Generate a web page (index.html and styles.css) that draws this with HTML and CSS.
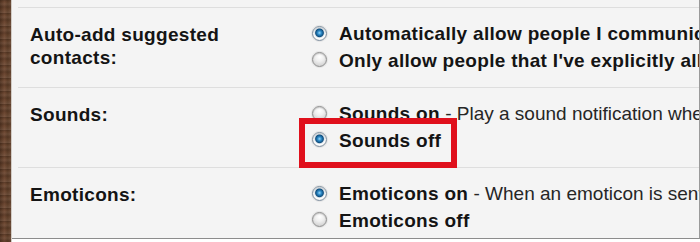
FILE: index.html
```html
<!DOCTYPE html>
<html>
<head>
<meta charset="utf-8">
<link rel="stylesheet" href="styles.css">
</head>
<body>
<div class="frame">
  <div class="wood"></div>
  <div class="panel">
    <div class="row">
      <div class="label">Auto-add suggested<br>contacts:</div>
      <div class="options">
        <div class="opt"><span class="radio checked"></span><b>Automatically allow people I communicate with often to chat with me and see when I'm online</b></div>
        <div class="opt"><span class="radio"></span><b>Only allow people that I've explicitly allowed to chat with me and see when I'm online</b></div>
      </div>
    </div>
    <div class="row">
      <div class="label">Sounds:</div>
      <div class="options">
        <div class="opt"><span class="radio"></span><b>Sounds on</b><span class="desc"> - Play a sound notification when a chat message is received</span></div>
        <div class="opt"><span class="radio checked"></span><b>Sounds off</b><span class="highlight"></span></div>
      </div>
    </div>
    <div class="row">
      <div class="label">Emoticons:</div>
      <div class="options">
        <div class="opt"><span class="radio checked"></span><b>Emoticons on</b><span class="desc"> - When an emoticon is sent in chat, show it as an image</span></div>
        <div class="opt"><span class="radio"></span><b>Emoticons off</b></div>
      </div>
    </div>
  </div>
</div>
</body>
</html>
```
FILE: styles.css
```css
html, body {
  margin: 0;
  padding: 0;
  background: #ffffff;
}
.frame {
  display: flex;
  width: 700px;
  height: 242px;
  overflow: hidden;
}
.wood {
  width: 11px;
  flex: none;
  height: 242px;
  background:
    repeating-linear-gradient(180deg, rgba(0,0,0,0.18) 0px, rgba(0,0,0,0) 2px, rgba(255,255,255,0.06) 4px, rgba(0,0,0,0.12) 7px, rgba(0,0,0,0) 9px, rgba(255,255,255,0.08) 13px),
    linear-gradient(90deg, #4f3220, #6e4832 40%, #5a3b26 70%, #6b4a35);
  border-right: 1px solid #d2ccc6;
}
.panel {
  flex: 1;
  height: 239px;
  background: #f4f4f4;
  border-right: 1px solid #9a9a9a;
  border-bottom: 1px solid #8c8c8c;
  padding: 7px 0 0 6px;
  box-sizing: border-box;
  overflow: hidden;
  font-family: "Liberation Sans", Arial, sans-serif;
  font-size: 19px;
  color: #141414;
  white-space: nowrap;
}
.row {
  display: flex;
  border-top: 1px solid #dedede;
  padding: 13px 0 13px 12px;
}
.label {
  width: 284px;
  flex: none;
  font-weight: bold;
  letter-spacing: 0.3px;
  line-height: 23px;
  margin-top: 2px;
}
.options {
  display: flex;
  flex-direction: column;
}
.opt {
  position: relative;
  display: flex;
  align-items: center;
  line-height: 26.5px;
}
.opt b {
  font-weight: bold;
  letter-spacing: 0.3px;
}
.desc {
  font-weight: normal;
  color: #262626;
  white-space: pre;
}
.radio {
  width: 13px;
  height: 13px;
  flex: none;
  margin-left: -2px;
  margin-right: 12px;
  border-radius: 50%;
  border: 1px solid #8e8e8e;
  background: radial-gradient(circle at 50% 30%, #ffffff 0%, #efefef 40%, #c4c4c4 100%);
  box-shadow: 0 0 0 1px #e4e4e4, inset 0 1px 1px rgba(0,0,0,0.15);
  position: relative;
  top: -1px;
}
.radio.checked {
  border-color: #7f8f9e;
  background: radial-gradient(circle at 50% 45%, #9ad6f7 0%, #2d8bc9 20%, #0f4e7e 40%, #dfe6ec 50%, #ffffff 60%, #d0d0d0 100%);
}
.highlight {
  position: absolute;
  left: -15px;
  top: -10px;
  width: 146px;
  height: 38px;
  border: 6px solid #e0101c;
}
```
